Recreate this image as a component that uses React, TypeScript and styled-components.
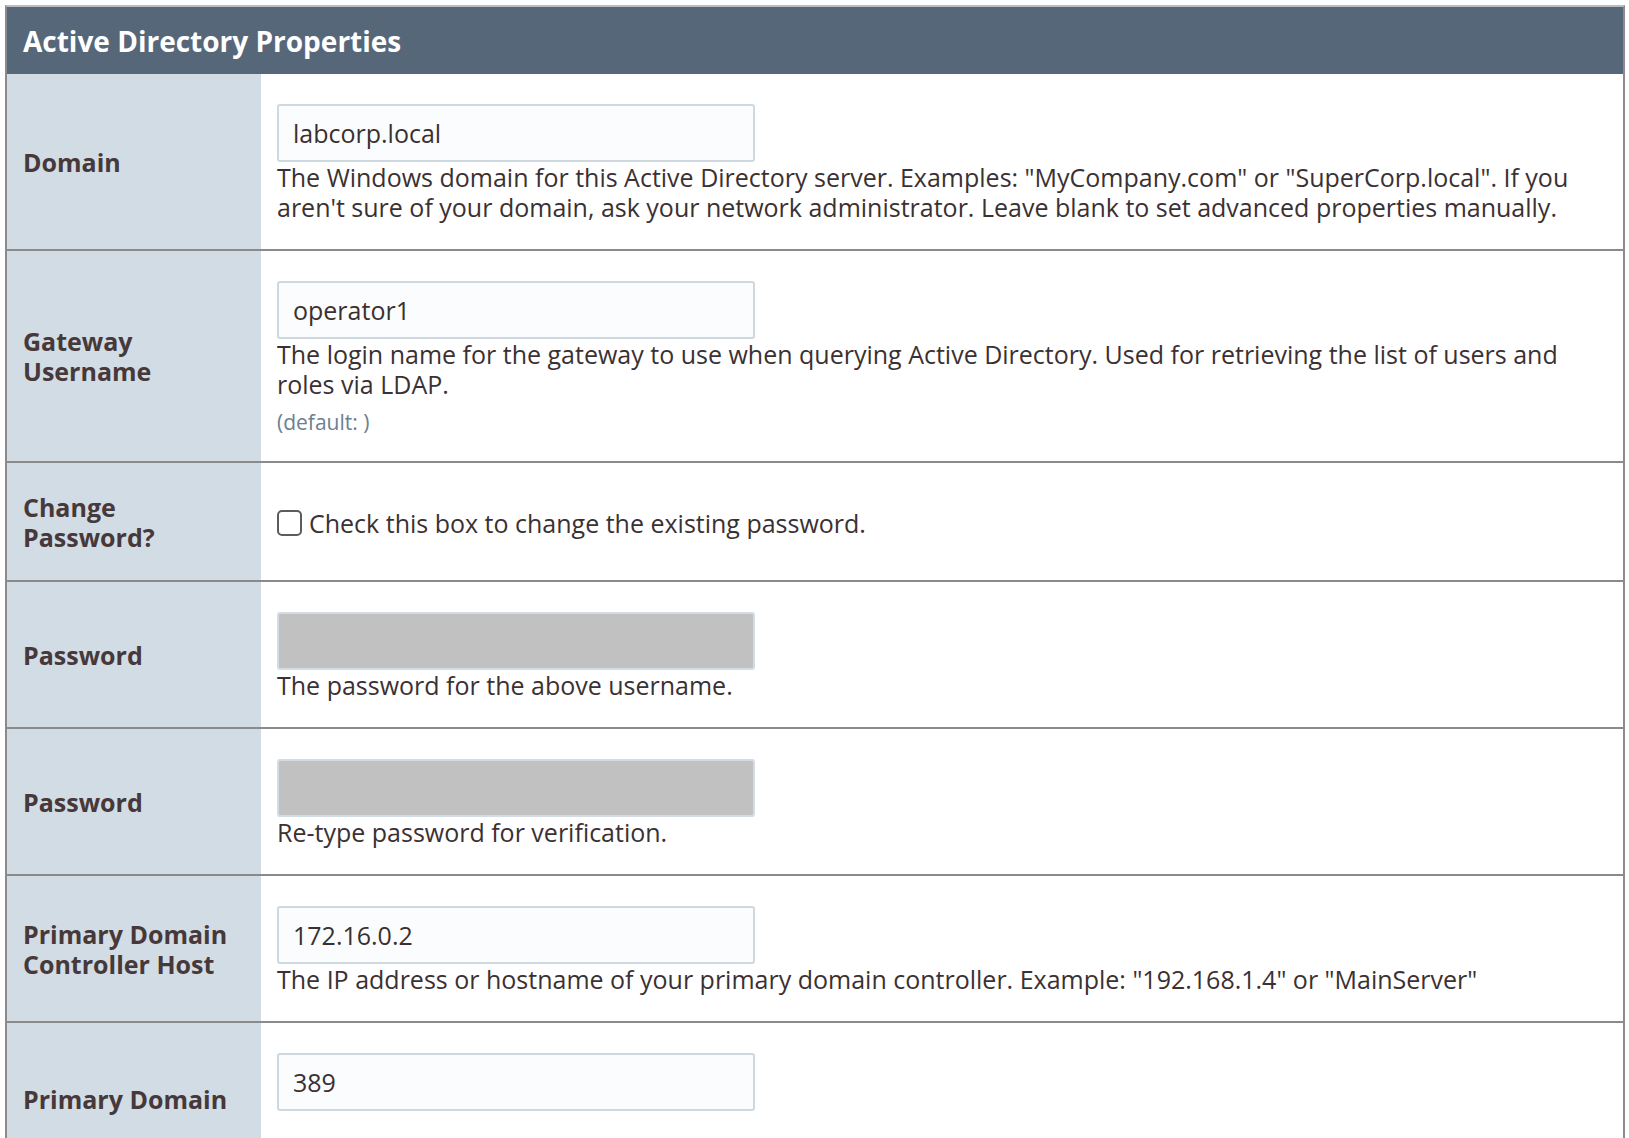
import React from "react";
import styled, { createGlobalStyle } from "styled-components";

const GlobalStyle = createGlobalStyle`
  html, body {
    margin: 0;
    padding: 0;
    background: #ffffff;
  }
  body {
    font-family: "Open Sans", "Noto Sans", sans-serif;
  }
`;

const Page = styled.div`
  padding: 5px 4px 0 5px;
`;

const Panel = styled.section`
  border: 2px solid #8b8b8b;
  border-top: 2px solid #b9bdc2;
  border-bottom: none;
`;

const Header = styled.h2`
  margin: 0;
  height: 67px;
  display: flex;
  align-items: center;
  padding: 0 16px;
  background: #56677a;
  color: #ffffff;
  font-family: "Open Sans", sans-serif;
  font-size: 28px;
  font-weight: 700;
`;

const Row = styled.div`
  display: grid;
  grid-template-columns: 254px 1fr;
  border-bottom: 2px solid #8a8a8a;
`;

const LabelCell = styled.div`
  display: flex;
  align-items: center;
  padding: 0 16px;
  background: #d1dce4;
  color: #47383a;
  font-size: 25px;
  font-weight: 700;
  line-height: 30px;
`;

const ContentCell = styled.div<{ $tail?: boolean }>`
  padding: 30px 24px ${(p) => (p.$tail ? "63px" : "27px")} 16px;
  background: #ffffff;
`;

const TextInput = styled.input<{ $disabled?: boolean }>`
  display: block;
  box-sizing: border-box;
  width: 478px;
  height: 58px;
  margin: 0;
  padding: 0 14px;
  border: 2px solid ${(p) => (p.$disabled ? "#d3dce4" : "#cdd8e1")};
  border-radius: 3px;
  background: ${(p) => (p.$disabled ? "#c1c1c1" : "#fbfcfd")};
  color: #3a3030;
  font-family: "Open Sans", sans-serif;
  font-size: 25px;
  outline: none;
`;

const Description = styled.div`
  color: #3b3132;
  font-size: 25px;
  line-height: 30px;
`;

const DefaultNote = styled.div`
  margin-top: 11px;
  color: #6c8093;
  font-size: 21px;
  line-height: 24px;
`;

const CheckLine = styled.label`
  display: flex;
  align-items: center;
  gap: 7px;
  margin: 15px 0;
  height: 30px;
  color: #3b3132;
  font-size: 25px;
  line-height: 30px;
`;

const CheckBox = styled.input`
  appearance: none;
  -webkit-appearance: none;
  box-sizing: border-box;
  width: 25px;
  height: 26px;
  margin: 0;
  border: 2px solid #5c5c5c;
  border-radius: 5px;
  background: #ffffff;
  flex: none;
`;

type Field =
  | { kind: "text"; label: string; value: string; desc?: string; note?: string }
  | { kind: "password"; label: string; desc: string }
  | { kind: "check"; label: string; desc: string };

const fields: Field[] = [
  {
    kind: "text",
    label: "Domain",
    value: "labcorp.local",
    desc:
      'The Windows domain for this Active Directory server. Examples: "MyCompany.com" or "SuperCorp.local". If you aren\'t sure of your domain, ask your network administrator. Leave blank to set advanced properties manually.',
  },
  {
    kind: "text",
    label: "Gateway Username",
    value: "operator1",
    desc:
      "The login name for the gateway to use when querying Active Directory. Used for retrieving the list of users and roles via LDAP.",
    note: "(default: )",
  },
  {
    kind: "check",
    label: "Change Password?",
    desc: "Check this box to change the existing password.",
  },
  {
    kind: "password",
    label: "Password",
    desc: "The password for the above username.",
  },
  {
    kind: "password",
    label: "Password",
    desc: "Re-type password for verification.",
  },
  {
    kind: "text",
    label: "Primary Domain Controller Host",
    value: "172.16.0.2",
    desc:
      'The IP address or hostname of your primary domain controller. Example: "192.168.1.4" or "MainServer"',
  },
  {
    kind: "text",
    label: "Primary Domain",
    value: "389",
  },
];

function FieldRow({ field }: { field: Field }) {
  const tail = field.kind === "text" && !field.desc;
  return (
    <Row>
      <LabelCell>{field.label}</LabelCell>
      <ContentCell $tail={tail}>
        {field.kind === "text" && (
          <>
            <TextInput type="text" defaultValue={field.value} />
            {field.desc && <Description>{field.desc}</Description>}
            {field.note && <DefaultNote>{field.note}</DefaultNote>}
          </>
        )}
        {field.kind === "password" && (
          <>
            <TextInput type="password" disabled $disabled />
            <Description>{field.desc}</Description>
          </>
        )}
        {field.kind === "check" && (
          <CheckLine>
            <CheckBox type="checkbox" />
            {field.desc}
          </CheckLine>
        )}
      </ContentCell>
    </Row>
  );
}

export default function App() {
  return (
    <Page>
      <GlobalStyle />
      <Panel>
        <Header>Active Directory Properties</Header>
        {fields.map((f, i) => (
          <FieldRow key={i} field={f} />
        ))}
      </Panel>
    </Page>
  );
}
